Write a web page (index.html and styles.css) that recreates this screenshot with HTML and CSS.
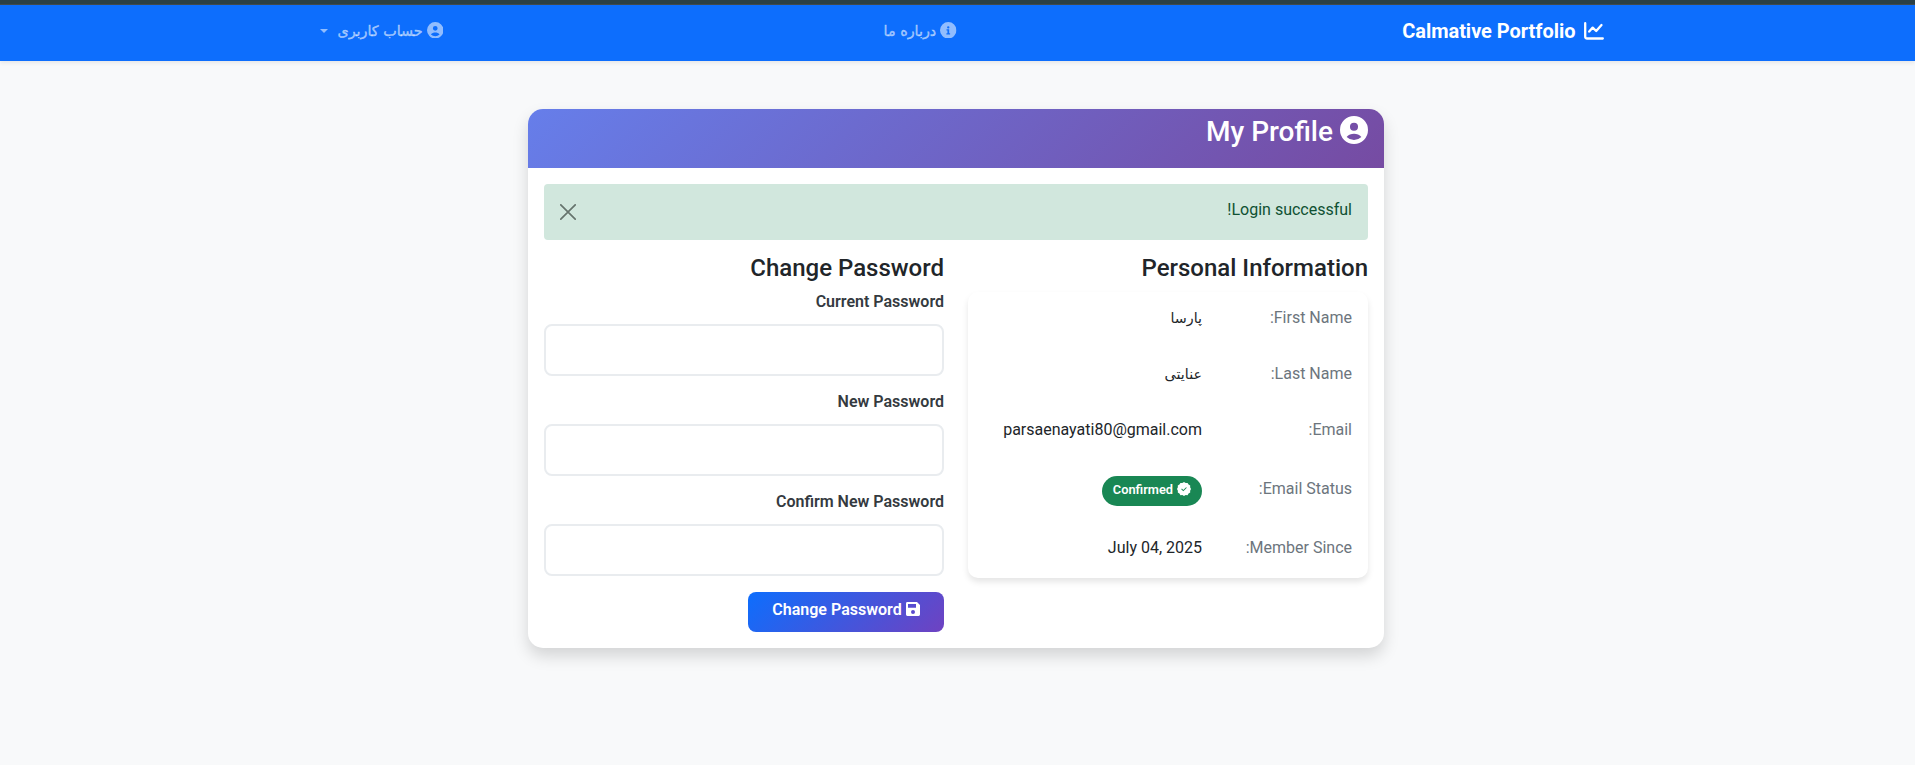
FILE: index.html
```html
<!DOCTYPE html>
<html lang="fa" dir="rtl">
<head>
<meta charset="utf-8">
<title>My Profile</title>
<link rel="stylesheet" href="styles.css">
</head>
<body>
<svg class="defs" width="0" height="0">
  <symbol id="i-user" viewBox="0 0 16 16"><path fill-rule="evenodd" d="M8 0a8 8 0 1 0 0 16A8 8 0 0 0 8 0zm0 3.800a2.300 2.300 0 1 1 0 4.600 2.300 2.300 0 0 1 0-4.600zM8 13.700a6 6 0 0 1-4.200-1.700c1-1.300 2.600-1.900 4.200-1.900s3.200.6 4.200 1.900A6 6 0 0 1 8 13.700z"/></symbol>
  <symbol id="i-info" viewBox="0 0 16 16"><path fill-rule="evenodd" d="M8 0a8 8 0 1 0 0 16A8 8 0 0 0 8 0zm0 4a1.150 1.150 0 1 1 0 2.300A1.150 1.150 0 0 1 8 4zM6.300 7h2.600v4h.9v1.200H6.200V11h1V8.200h-.9z"/></symbol>
  <symbol id="i-check" viewBox="0 0 16 16"><path fill-rule="evenodd" d="M8 0l1.900 1.100 2.200-.1 1.100 1.900 1.900 1.100-.1 2.100L16 8l-1 1.900.1 2.100-1.900 1.100-1.100 1.900-2.200-.1L8 16l-1.900-1.100-2.200.1-1.100-1.900L.9 12 1 9.900 0 8l1-1.900L.9 4l1.900-1.100L3.900 1l2.200.1zM7.200 10.700l4-4-.8-.8-3.200 3.200-1.600-1.600-.8.8z"/></symbol>
  <symbol id="i-save" viewBox="0 0 14 14"><path fill-rule="evenodd" d="M1.400 0H11l3 3v9.600a1.400 1.400 0 0 1-1.400 1.400H1.400A1.400 1.400 0 0 1 0 12.600V1.400A1.400 1.400 0 0 1 1.400 0zM2 2v3.800h8V2zm5 6a2 2 0 1 0 0 4 2 2 0 0 0 0-4z"/></symbol>
</svg>
<div class="topline"></div>
<nav class="navbar">
  <div class="container">
    <a class="brand">
      <svg class="brand-icon" viewBox="0 0 20 18" fill="none" stroke="currentColor" stroke-width="2.300" stroke-linecap="round" stroke-linejoin="round"><path d="M1.200 1.200v13.300A2 2 0 0 0 3.200 16.500H18.800M5.200 9.600l3.500-4 3.500 3.400L17.500 3"/></svg>
      <span dir="ltr">Calmative Portfolio</span>
    </a>
    <a class="nav-link about"><svg class="nav-icon"><use href="#i-info"/></svg><span>درباره ما</span></a>
    <a class="nav-link account"><svg class="nav-icon"><use href="#i-user"/></svg><span>حساب کاربری</span><i class="caret"></i></a>
  </div>
</nav>
<main class="card">
  <header class="card-header">
    <svg class="title-icon"><use href="#i-user"/></svg>
    <h1>My Profile</h1>
  </header>
  <div class="card-body">
    <div class="alert">
      <span>Login successful!</span>
      <svg class="close" viewBox="0 0 16 16" stroke="currentColor" stroke-width="1.700" stroke-linecap="round"><path d="M.8.8l14.400 14.400M15.200.8L.8 15.200"/></svg>
    </div>
    <div class="columns">
      <section>
        <h2>Personal Information</h2>
        <dl class="info">
          <div class="row"><dt>First Name:</dt><dd class="fa">پارسا</dd></div>
          <div class="row"><dt>Last Name:</dt><dd class="fa">عنایتی</dd></div>
          <div class="row"><dt>Email:</dt><dd>parsaenayati80@gmail.com</dd></div>
          <div class="row status"><dt>Email Status:</dt><dd class="badge"><svg class="badge-icon"><use href="#i-check"/></svg><span>Confirmed</span></dd></div>
          <div class="row"><dt>Member Since:</dt><dd dir="ltr">July 04, 2025</dd></div>
        </dl>
      </section>
      <section>
        <h2>Change Password</h2>
        <form class="form">
          <label class="field"><span>Current Password</span><input type="password"></label>
          <label class="field"><span>New Password</span><input type="password"></label>
          <label class="field"><span>Confirm New Password</span><input type="password"></label>
          <button type="button" class="submit"><svg class="save-icon"><use href="#i-save"/></svg><span>Change Password</span></button>
        </form>
      </section>
    </div>
  </div>
</main>
</body>
</html>
```
FILE: styles.css
```css
* { box-sizing: border-box; margin: 0; }
body {
  height: 765px;
  overflow: hidden;
  background: #f8f9fa;
  color: #212529;
  font: 400 16px/24px Roboto, "DejaVu Sans", sans-serif;
}
svg { display: block; flex: none; fill: currentColor; }
.defs { position: absolute; }
.topline { height: 5px; background: #2b4045; border-bottom: 1px solid #424b4c; }
.navbar { height: 56px; padding-right: 4px; background: #0d6efd; box-shadow: 0 2px 4px rgba(0, 0, 0, .075); }
.container {
  display: flex;
  justify-content: space-between;
  align-items: center;
  width: 1296px;
  height: 52px;
  margin: 0 auto;
}
.brand { display: flex; align-items: center; gap: 8px; color: #fff; font-size: 20px; font-weight: 700; letter-spacing: -.03px; }
.brand-icon { width: 20px; height: 18px; fill: none; }
.nav-link {
  display: flex;
  align-items: center;
  gap: 4px;
  color: rgba(255, 255, 255, .55);
  font: 500 14.300px/24px "DejaVu Sans", sans-serif;
  -webkit-text-stroke: .4px rgba(255, 255, 255, .5);
}
.nav-icon { width: 16.500px; height: 16.500px; margin-top: -2px; }
.about { padding-right: 5px; }
.account { padding-left: 12px; }
.caret { margin-right: 6px; border: 4px solid transparent; border-top-color: currentColor; border-bottom: 0; }
.card {
  width: 856px;
  height: 539px;
  margin: 48px 531px 0 528px;
  border-radius: 15px;
  overflow: hidden;
  background: #fff;
  box-shadow: 0 8px 16px rgba(0, 0, 0, .15);
}
.card-header {
  display: flex;
  gap: 7px;
  height: 59px;
  padding: 7px 16px;
  background: linear-gradient(135deg, #667eea 0%, #764ba2 100%);
  color: #fff;
}
.title-icon { width: 28px; height: 28px; }
h1 { font-size: 28px; font-weight: 500; line-height: 32px; }
.card-body { padding: 16px; }
.alert {
  display: flex;
  justify-content: space-between;
  height: 56px;
  padding: 14px 16px;
  border-radius: 4px;
  background: #d1e7dd;
  color: #0f5132;
}
.close { width: 16px; height: 16px; margin-top: 6px; color: #66746d; }
.columns { display: grid; grid-template-columns: 400px 400px; gap: 24px; }
h2 { height: 52px; padding-top: 13px; font-size: 24px; font-weight: 500; line-height: 30px; }
.info { border-radius: 10px; box-shadow: 0 4px 6px rgba(0, 0, 0, .1); }
.row { display: flex; height: 56px; padding: 14px 16px; }
.row dt { width: 150px; color: #6c757d; }
.status { height: 62px; padding-top: 17px; }
.fa { font-family: "DejaVu Sans", sans-serif; font-size: 14.300px; }
.badge {
  display: flex;
  gap: 4px;
  width: 100px;
  height: 30px;
  margin-top: -1px;
  padding: 6px 11px;
  border-radius: 15px;
  background: #198754;
  color: #fff;
  font-size: 12.800px;
  font-weight: 600;
  line-height: 15px;
}
.badge-icon { width: 14px; height: 14px; }
.form { display: flex; flex-direction: column; }
.field { height: 100px; color: #343a40; font-weight: 600; }
.field span { display: block; height: 31px; margin-top: -2px; line-height: 24px; }
.field input { display: block; width: 100%; height: 52px; margin-top: 3px; border: 2px solid #e9ecef; border-radius: 8px; background: #fff; }
.submit {
  display: flex;
  justify-content: center;
  gap: 4px;
  width: 196px;
  height: 40px;
  padding: 7px 0;
  border: 0;
  border-radius: 8px;
  background: linear-gradient(135deg, #0d6efd, #6f42c1);
  color: #fff;
  font: 600 16px/22px Roboto, sans-serif;
}
.save-icon { width: 14px; height: 14px; margin-top: 3px; }
```
